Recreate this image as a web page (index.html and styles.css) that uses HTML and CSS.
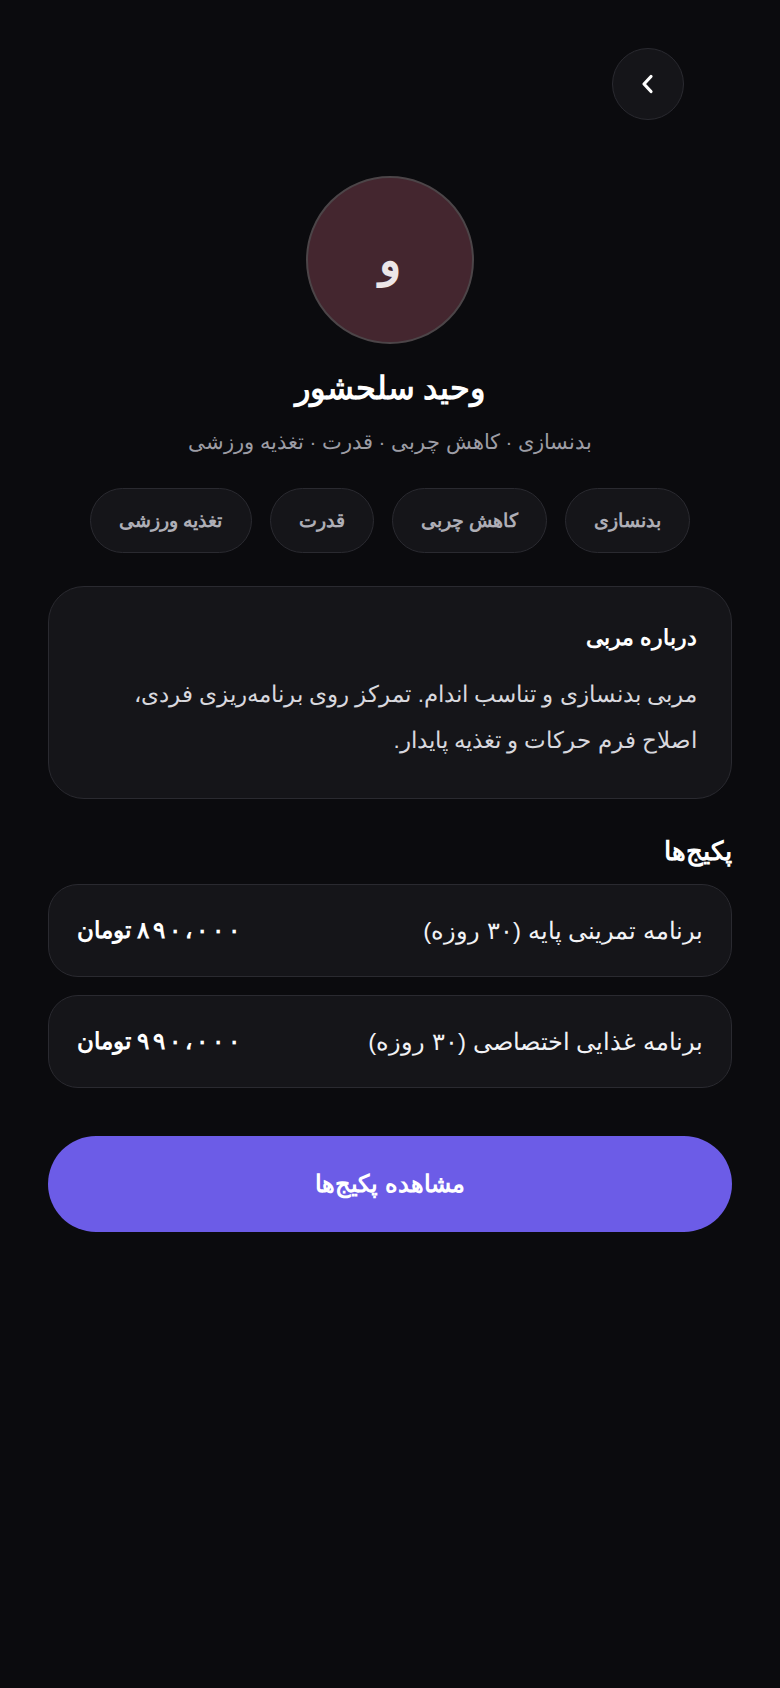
FILE: index.html
```html
<!DOCTYPE html>
<html lang="fa" dir="rtl">
<head>
<meta charset="utf-8">
<title>وحید سلحشور</title>
<link rel="stylesheet" href="styles.css">
</head>
<body>
<div class="page">
  <header class="topbar">
    <button class="back" aria-label="بازگشت">
      <svg width="24" height="24" viewBox="0 0 24 24" aria-hidden="true"><polyline points="15,4.5 8,12 15,19.5" fill="none" stroke="#ffffff" stroke-width="3.2" stroke-linecap="round" stroke-linejoin="round"/></svg>
    </button>
  </header>

  <section class="profile">
    <div class="avatar">و</div>
    <h1 class="name">وحید سلحشور</h1>
    <p class="specialties">بدنسازی · کاهش چربی · قدرت · تغذیه ورزشی</p>
    <div class="chips">
      <span class="chip">بدنسازی</span>
      <span class="chip">کاهش چربی</span>
      <span class="chip">قدرت</span>
      <span class="chip">تغذیه ورزشی</span>
    </div>
  </section>

  <section class="card about">
    <h2 class="card-title">درباره مربی</h2>
    <p class="about-text">مربی بدنسازی و تناسب اندام. تمرکز روی برنامه‌ریزی فردی،<br>اصلاح فرم حرکات و تغذیه پایدار.</p>
  </section>

  <h2 class="section-title">پکیج‌ها</h2>
  <div class="packages">
    <div class="card package">
      <span class="pkg-name">برنامه تمرینی پایه (۳۰ روزه)</span>
      <span class="pkg-price"><span class="num"><span>۸</span><span>۹</span><span>۰</span><span>،</span><span>۰</span><span>۰</span><span>۰</span></span> تومان</span>
    </div>
    <div class="card package">
      <span class="pkg-name">برنامه غذایی اختصاصی (۳۰ روزه)</span>
      <span class="pkg-price"><span class="num"><span>۹</span><span>۹</span><span>۰</span><span>،</span><span>۰</span><span>۰</span><span>۰</span></span> تومان</span>
    </div>
  </div>

  <button class="cta">مشاهده پکیج‌ها</button>
</div>
</body>
</html>
```
FILE: styles.css
```css
* { box-sizing: border-box; }
html, body {
  margin: 0;
  padding: 0;
  background: #0b0b0e;
}
body {
  font-family: "Liberation Sans", sans-serif;
  color: #ffffff;
  min-height: 1688px;
}
.page {
  padding: 48px 48px 40px;
  display: flex;
  flex-direction: column;
}
.topbar {
  display: flex;
  justify-content: flex-start;
  padding: 0 48px;
}
.back {
  width: 72px;
  height: 72px;
  border-radius: 50%;
  background: #151519;
  border: 1px solid #2a2a30;
  display: flex;
  align-items: center;
  justify-content: center;
  padding: 0;
}
.profile {
  display: flex;
  flex-direction: column;
  align-items: center;
  margin-top: 56px;
}
.avatar {
  width: 168px;
  height: 168px;
  border-radius: 50%;
  background: #44262f;
  border: 2px solid #4c4548;
  display: flex;
  align-items: center;
  justify-content: center;
  font-size: 46px;
  font-weight: bold;
  color: #ece6e8;
}
.name {
  margin: 24px 0 0;
  font-size: 32px;
  line-height: 40px;
  font-weight: bold;
  color: #ffffff;
}
.specialties {
  margin: 20px 0 0;
  font-size: 20.5px;
  line-height: 28px;
  color: #9d9da5;
}
.chips {
  display: flex;
  gap: 18px;
  margin-top: 32px;
  justify-content: center;
}
.chip {
  height: 65px;
  padding: 0 28px;
  border-radius: 33px;
  background: #151519;
  border: 1px solid #2a2a30;
  display: flex;
  align-items: center;
  font-size: 19px;
  font-weight: bold;
  color: #aeaeb6;
}
.card {
  background: #151519;
  border: 1px solid #2a2a30;
}
.about {
  margin-top: 33px;
  border-radius: 36px;
  padding: 36px 34px 34px;
}
.card-title {
  margin: 0;
  font-size: 22px;
  line-height: 30px;
  font-weight: bold;
  color: #ffffff;
}
.about-text {
  margin: 19px 0 0;
  font-size: 22.5px;
  line-height: 46px;
  color: #d8d8de;
  white-space: nowrap;
}
.section-title {
  margin: 37px 0 0;
  font-size: 26px;
  line-height: 30px;
  font-weight: bold;
  color: #ffffff;
}
.packages {
  display: flex;
  flex-direction: column;
  gap: 18px;
  margin-top: 18px;
}
.package {
  height: 93px;
  border-radius: 30px;
  padding: 0 28px;
  display: flex;
  align-items: center;
  justify-content: space-between;
}
.pkg-name {
  font-size: 24px;
  color: #f2f2f5;
}
.pkg-price {
  font-size: 23px;
  font-weight: bold;
  color: #ffffff;
  white-space: nowrap;
}
.pkg-price .num {
  display: inline-flex;
  direction: ltr;
  gap: 4px;
}
.cta {
  margin-top: 48px;
  height: 96px;
  border: none;
  border-radius: 48px;
  background: #6c5ce7;
  color: #ffffff;
  font-family: inherit;
  font-size: 24px;
  font-weight: bold;
}
```
